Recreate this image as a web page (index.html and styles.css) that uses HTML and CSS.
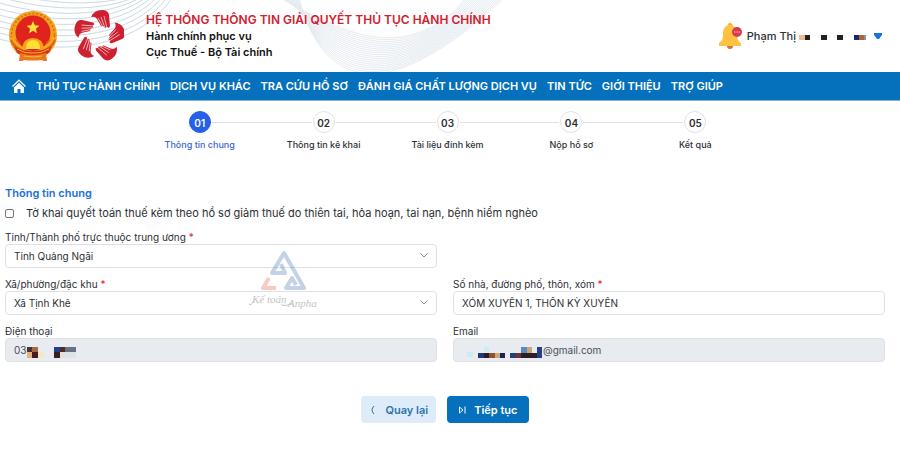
FILE: index.html
```html
<!DOCTYPE html>
<html lang="vi">
<head>
    <meta charset="UTF-8">
    <meta name="viewport" content="width=device-width, initial-scale=1.0">
    <title>Hệ thống thông tin giải quyết thủ tục hành chính</title>
    <link rel="stylesheet" href="styles.css">
</head>
<body>

    <header class="header">
        <svg class="waves" id="waves" viewBox="0 0 520 72" aria-hidden="true"></svg>

        <svg class="emblem" viewBox="0 0 50 50" aria-hidden="true">
            <circle cx="25" cy="24" r="24" fill="#f0a21c"/>
            <circle cx="25" cy="24" r="21.500" fill="none" stroke="#e0661b" stroke-width="1.500" stroke-dasharray="2 2"/>
            <circle cx="25" cy="22" r="17.500" fill="#e0231c"/>
            <path d="M2 29q9-3 11 6l2 5q-10-2-13-11zM48 29q-9-3-11 6l-2 5q10-2 13-11z" fill="#e2621b"/>
            <path d="M4 26q4 9 13 12M46 26q-4 9-13 12" stroke="#f5a81d" stroke-width="3" fill="none"/>
            <path d="M25 10l1.800 4.300 4.700.400-3.600 3 1.100 4.600-4-2.500-4 2.500 1.100-4.600-3.600-3 4.700-.400z" fill="#ffe03a"/>
            <path d="M14 38q1-11 11-11t11 11z" fill="#f8a01d"/>
            <path d="M18 38q0-9 7-9t7 9z" fill="#ffdf36"/>
            <path d="M6 35q10 6 19 4 9 2 19-4l-3 7q-8 4-16 4t-16-4z" fill="#d8331c"/>
            <path d="M12 42q13 4 26 0l1 8q-3 1-5-1-9 1-18 0-2 2-5 1z" fill="#e8791e"/>
            <path d="M9 38q8 5 16 4 8 1 16-4M16 45q9 2 18 0" stroke="#f7b723" fill="none"/>
        </svg>

        <svg class="hands" viewBox="0 0 50 52" aria-hidden="true">
            <defs>
                <g id="hand">
                    <path d="M17 7Q20 0 28 0q6 0 7 5l1 11-1 2-2-1-2 1-2-2-2 0-4-7q-2-3-6-2z" fill="#cf2030"/>
                    <path d="M24 8l5 9M27 7l4 11M30 6l3 12" stroke="#fff" stroke-width=".600" fill="none"/>
                </g>
            </defs>
            <use href="#hand"/>
            <use href="#hand" transform="rotate(72 25 26)"/>
            <use href="#hand" transform="rotate(144 25 26)"/>
            <use href="#hand" transform="rotate(216 25 26)"/>
            <use href="#hand" transform="rotate(288 25 26)"/>
        </svg>

        <div class="brand">
            <h1 class="brand-title">HỆ THỐNG THÔNG TIN GIẢI QUYẾT THỦ TỤC HÀNH CHÍNH</h1>
            <p class="brand-line">Hành chính phục vụ</p>
            <p class="brand-line">Cục Thuế - Bộ Tài chính</p>
        </div>

        <button class="user" type="button">
            <svg class="bell" viewBox="0 0 26 28" aria-hidden="true">
                <circle cx="12" cy="3.500" r="2.500" fill="#f4b03a"/>
                <path d="M9 24a3 3 0 0 0 6 0z" fill="#d9742b"/>
                <path d="M12 3c5 0 7 4 7 9 0 5 1 7 4 9v3H1v-3c3-2 4-4 4-9 0-5 2-9 7-9z" fill="#ffc142"/>
                <circle cx="19" cy="10" r="5" fill="#d93a50"/>
                <path d="M16 10h6" stroke="#f6c4cc" stroke-dasharray="1.500 .700"/>
            </svg>
            <span>Phạm Thị</span>
            <svg class="mask-name" viewBox="0 0 68 6" aria-hidden="true">
                <path d="M0 0h6v5H0z" fill="#f3b98c"/>
                <path d="M6 0h5v5H6zM22 0h6v5h-6zM38 0h6v5h-6z" fill="#222"/>
                <path d="M55 0h5v5h-5z" fill="#1d2678"/>
                <path d="M60 0h5v5h-5z" fill="#a8683c"/>
                <path d="M65 0h2v5h-2z" fill="#8a94a8"/>
            </svg>
            <svg class="caret" viewBox="0 0 8 6" aria-hidden="true"><path d="M0 0h8v2L5 6H3L0 2z" fill="#1a73d8"/></svg>
        </button>
    </header>

    <nav class="nav">
        <a class="nav-link" href="#" aria-label="Trang chủ">
            <svg class="home" viewBox="0 0 14 14" aria-hidden="true">
                <path d="M.500 7.500L7 1.200l6.500 6.300" stroke="#fff" stroke-width="1.200" fill="none"/>
                <path d="M7 3.800l5 4.700V14H8.500v-4h-3v4H2V8.500z" fill="#fff"/>
            </svg>
        </a>
        <a class="nav-link" href="#">THỦ TỤC HÀNH CHÍNH</a>
        <a class="nav-link" href="#">DỊCH VỤ KHÁC</a>
        <a class="nav-link" href="#">TRA CỨU HỒ SƠ</a>
        <a class="nav-link" href="#">ĐÁNH GIÁ CHẤT LƯỢNG DỊCH VỤ</a>
        <a class="nav-link" href="#">TIN TỨC</a>
        <a class="nav-link" href="#">GIỚI THIỆU</a>
        <a class="nav-link" href="#">TRỢ GIÚP</a>
    </nav>

    <main class="main">
        <ol class="steps">
            <li class="step active"><span class="step-num">01</span><span class="step-label">Thông tin chung</span></li>
            <li class="step"><span class="step-num">02</span><span class="step-label">Thông tin kê khai</span></li>
            <li class="step"><span class="step-num">03</span><span class="step-label">Tài liệu đính kèm</span></li>
            <li class="step"><span class="step-num">04</span><span class="step-label">Nộp hồ sơ</span></li>
            <li class="step"><span class="step-num">05</span><span class="step-label">Kết quả</span></li>
        </ol>

        <form class="form">
            <h2 class="form-title">Thông tin chung</h2>
            <div class="check-row">
                <input class="check" type="checkbox" id="thientai">
                <label for="thientai">Tờ khai quyết toán thuế kèm theo hồ sơ giảm thuế do thiên tai, hỏa hoạn, tai nạn, bệnh hiểm nghèo</label>
            </div>

            <div class="fields">
                <div class="field">
                    <label class="label" for="tinh">Tỉnh/Thành phố trực thuộc trung ương <span class="req">*</span></label>
                    <div class="control">
                        <select class="input" id="tinh"><option>Tỉnh Quảng Ngãi</option></select>
                        <svg class="chevron" viewBox="0 0 8 5" aria-hidden="true"><path d="M.500.500L4 4 7.500.500"/></svg>
                    </div>
                </div>
                <div class="field new-row">
                    <label class="label" for="xa">Xã/phường/đặc khu <span class="req">*</span></label>
                    <div class="control">
                        <select class="input" id="xa"><option>Xã Tịnh Khê</option></select>
                        <svg class="chevron" viewBox="0 0 8 5" aria-hidden="true"><path d="M.500.500L4 4 7.500.500"/></svg>
                    </div>
                </div>
                <div class="field">
                    <label class="label" for="sonha">Số nhà, đường phố, thôn, xóm <span class="req">*</span></label>
                    <div class="control">
                        <input class="input" type="text" id="sonha" value="XÓM XUYÊN 1, THÔN KỲ XUYÊN">
                    </div>
                </div>
                <div class="field">
                    <label class="label" for="phone">Điện thoại</label>
                    <div class="control">
                        <input class="input" type="text" id="phone" value="03" disabled>
                        <svg class="mask mask-phone" viewBox="0 0 50 11" shape-rendering="crispEdges" aria-hidden="true">
                            <path d="M0 0h5v5H0z" fill="#4a332e"/><path d="M5 0h6v5H5z" fill="#a8683c"/>
                            <path d="M0 5h5v6H0z" fill="#e9b077"/><path d="M5 5h6v6H5z" fill="#451a22"/>
                            <path d="M11 5h6v6h-6z" fill="#f5e6c4"/>
                            <path d="M27 0h6v5h-6z" fill="#24408c"/><path d="M33 0h5v5h-5z" fill="#4b2d27"/>
                            <path d="M38 0h11v5H38z" fill="#66727f"/>
                            <path d="M27 5h6v6h-6z" fill="#3a2026"/><path d="M33 5h5v6h-5z" fill="#e9dfd8"/>
                            <path d="M38 5h11v6H38z" fill="#dde3ea"/>
                        </svg>
                    </div>
                </div>
                <div class="field">
                    <label class="label" for="email">Email</label>
                    <div class="control">
                        <input class="input email" type="text" id="email" value="@gmail.com" disabled>
                        <svg class="mask mask-email" viewBox="0 0 76 11" shape-rendering="crispEdges" aria-hidden="true">
                            <path d="M0 5h6v5H0zM17 0h5v5h-5z" fill="#c9eef2"/>
                            <path d="M11 6h6v5h-6z" fill="#24357c"/><path d="M17 6h5v5h-5z" fill="#2b1c22"/>
                            <path d="M22 6h6v5h-6z" fill="#8f5136"/><path d="M28 6h5v5h-5z" fill="#cda67c"/>
                            <path d="M33 6h5v5h-5z" fill="#1c2550"/>
                            <path d="M43 6h6v5h-6z" fill="#24407c"/><path d="M49 6h5v5h-5z" fill="#6b3530"/>
                            <path d="M54 0h6v6h-6z" fill="#5a8ac4"/><path d="M60 0h5v6h-5z" fill="#c9a678"/>
                            <path d="M54 6h16v5H54z" fill="#2b2024"/>
                            <path d="M70 0h5v11h-5z" fill="#24408c"/>
                        </svg>
                    </div>
                </div>
            </div>

            <svg class="watermark" viewBox="0 0 76 66" aria-hidden="true">
                <g fill="none" stroke-width="4" stroke-linejoin="round" opacity=".32">
                    <path d="M36 16l4 9H27L39 5l20 35H41l6-10 4 7" stroke="#4a73b4"/>
                    <path d="M24 30l-6 10h13" stroke="#e8603c"/>
                </g>
                <text x="7" y="55">Kế toán</text>
                <text x="43" y="59">Anpha</text>
                <path d="M4 56q2 2 5-3M36 57q5 2 11-2" stroke="#c4c4c6" fill="none"/>
            </svg>

            <div class="actions">
                <button class="btn btn-back" type="button">
                    <svg class="btn-icon" viewBox="0 0 8 8" aria-hidden="true"><path d="M5 0Q1 4 5 8"/></svg>
                    Quay lại
                </button>
                <button class="btn btn-next" type="submit">
                    <svg class="btn-icon" viewBox="0 0 8 8" aria-hidden="true"><path d="M1.500 1v6L5 4zM7 .500v7"/></svg>
                    Tiếp tục
                </button>
            </div>
        </form>
    </main>

    <script>
        // Decorative line waves behind the header
        const waves = document.getElementById("waves");

        function addLine(d, color) {
            const path = document.createElementNS("http://www.w3.org/2000/svg", "path");
            path.setAttribute("d", d);
            path.setAttribute("stroke", color);
            waves.appendChild(path);
        }

        for (let i = 0; i < 12; i++) {
            const y = i * 6 - 28;
            const end = 118 + i * 5;
            addLine(`M-4 ${y} C 50 ${y + 16}, ${end - 36} ${y + 16}, ${end} -4`, "#c9dae2");
        }

        for (let i = 0; i < 20; i++) {
            addLine(`M${280 + i} -2 C ${336 - i} ${28 + i * 2}, ${404 - i * 2} ${70 + i * 3}, ${466 + i * 2} -2`, "#e6ebf1");
        }
    </script>

</body>
</html>
```

FILE: styles.css
```css
* {
    box-sizing: border-box;
}

body {
    font-family: Inter, "Liberation Sans", sans-serif;
    font-size: 10px;
    color: #2b2f36;
    background-color: #fff;
    margin: 0;
}

.header {
    position: relative;
    display: flex;
    align-items: center;
    height: 72px;
    padding: 0 18px 0 8px;
}

.waves {
    position: absolute;
    left: 0;
    top: 0;
    width: 520px;
    height: 72px;
    fill: none;
    z-index: -1;
}

.emblem {
    width: 50px;
    height: 50px;
}

.hands {
    width: 50px;
    height: 52px;
    margin: 0 22px 0 16px;
}

.brand {
    flex: 1;
}

.brand-title,
.brand-line {
    margin: 0;
    font-size: 11px;
    font-weight: 600;
    line-height: 16px;
    color: #111;
}

.brand-title {
    font-size: 12px;
    color: #d0202e;
}

.user {
    display: flex;
    align-items: center;
    gap: 3px;
    padding: 0;
    border: none;
    background: none;
    font-family: inherit;
    font-size: 11px;
    font-weight: 500;
    color: #2b2f36;
    cursor: pointer;
}

.bell {
    width: 26px;
    height: 28px;
}

.mask-name {
    width: 68px;
    height: 6px;
    margin-top: 4px;
}

.caret {
    width: 8px;
    height: 6px;
    margin-left: 4px;
}

.nav {
    display: flex;
    align-items: center;
    gap: 10px;
    height: 29px;
    padding: 0 12px;
    background-color: #0570bc;
    border-bottom: 1px solid #7fb2da;
}

.nav-link {
    font-size: 11px;
    font-weight: 600;
    color: #fff;
    text-decoration: none;
}

.home {
    display: block;
    width: 14px;
    height: 14px;
}

.main {
    padding: 10px 10px 0 5px;
}

.steps {
    display: flex;
    width: 70%;
    margin: 0 auto;
    padding: 0;
    list-style: none;
}

.step {
    position: relative;
    flex: 1;
    display: flex;
    flex-direction: column;
    align-items: center;
    gap: 5px;
}

/* connector to the next step */
.step:not(:last-child)::after {
    content: "";
    position: absolute;
    top: 11px;
    left: calc(50% + 12px);
    width: calc(100% - 24px);
    height: 1px;
    background-color: #dfe1e5;
}

.step-num {
    width: 22px;
    height: 22px;
    border: 1px solid #e0e2e6;
    border-radius: 50%;
    font-size: 10px;
    font-weight: 600;
    line-height: 22px;
    text-align: center;
}

.step-label {
    font-size: 9px;
    font-weight: 500;
    line-height: 14px;
}

.active .step-num {
    background-color: #2560e8;
    border-color: #2560e8;
    color: #fff;
}

.active .step-label {
    color: #3a66d0;
}

.form {
    position: relative;
    margin: 33px 5px 0 0;
}

.form-title {
    margin: 0;
    font-size: 11px;
    font-weight: 600;
    line-height: 16px;
    color: #1c6fe0;
}

.check-row {
    display: flex;
    align-items: center;
    gap: 12px;
    margin-top: 4px;
    font-size: 11px;
    line-height: 16px;
}

.check {
    appearance: none;
    width: 9px;
    height: 9px;
    margin: 0;
    border: 1px solid #777;
    border-radius: 2px;
    background-color: #fff;
}

.check:checked {
    background-color: #0570bc;
}

.fields {
    display: grid;
    grid-template-columns: 1fr 1fr;
    gap: 9px 16px;
    margin-top: 9px;
}

.new-row {
    grid-column: 1;
}

.label {
    display: block;
    font-size: 10px;
    line-height: 14px;
}

.req {
    color: #e02424;
}

.control {
    position: relative;
}

.input {
    display: block;
    appearance: none;
    width: 100%;
    height: 24px;
    padding: 0 8px;
    border: 1px solid #dfe1e5;
    border-radius: 4px;
    background-color: #fff;
    font-family: inherit;
    font-size: 10px;
    color: #2b2f36;
}

.input:disabled {
    background-color: #e8ebef;
    color: #4a4f57;
    opacity: 1;
}

.email {
    padding-left: 89px;
}

.chevron {
    position: absolute;
    right: 9px;
    top: 9px;
    width: 8px;
    height: 5px;
    fill: none;
    stroke: #8b9097;
}

.mask {
    position: absolute;
    top: 9px;
    height: 11px;
}

.mask-phone {
    left: 22px;
    width: 50px;
}

.mask-email {
    left: 14px;
    width: 76px;
}

.watermark {
    position: absolute;
    left: 240px;
    top: 63px;
    width: 76px;
    height: 66px;
    pointer-events: none;
}

.watermark text {
    font-family: "Liberation Serif", serif;
    font-size: 11px;
    font-style: italic;
    fill: #c4c4c6;
}

.actions {
    display: flex;
    justify-content: center;
    gap: 11px;
    margin-top: 34px;
}

.btn {
    display: flex;
    align-items: center;
    gap: 8px;
    height: 27px;
    padding: 0 8px;
    border: none;
    border-radius: 4px;
    font-family: inherit;
    font-size: 11px;
    font-weight: 600;
    cursor: pointer;
}

.btn-icon {
    width: 8px;
    height: 8px;
    fill: none;
    stroke: currentColor;
}

.btn-back {
    background-color: #deecf9;
    color: #2a75ad;
}

.btn-next {
    padding: 0 11px;
    background-color: #0570bc;
    color: #fff;
}
```
